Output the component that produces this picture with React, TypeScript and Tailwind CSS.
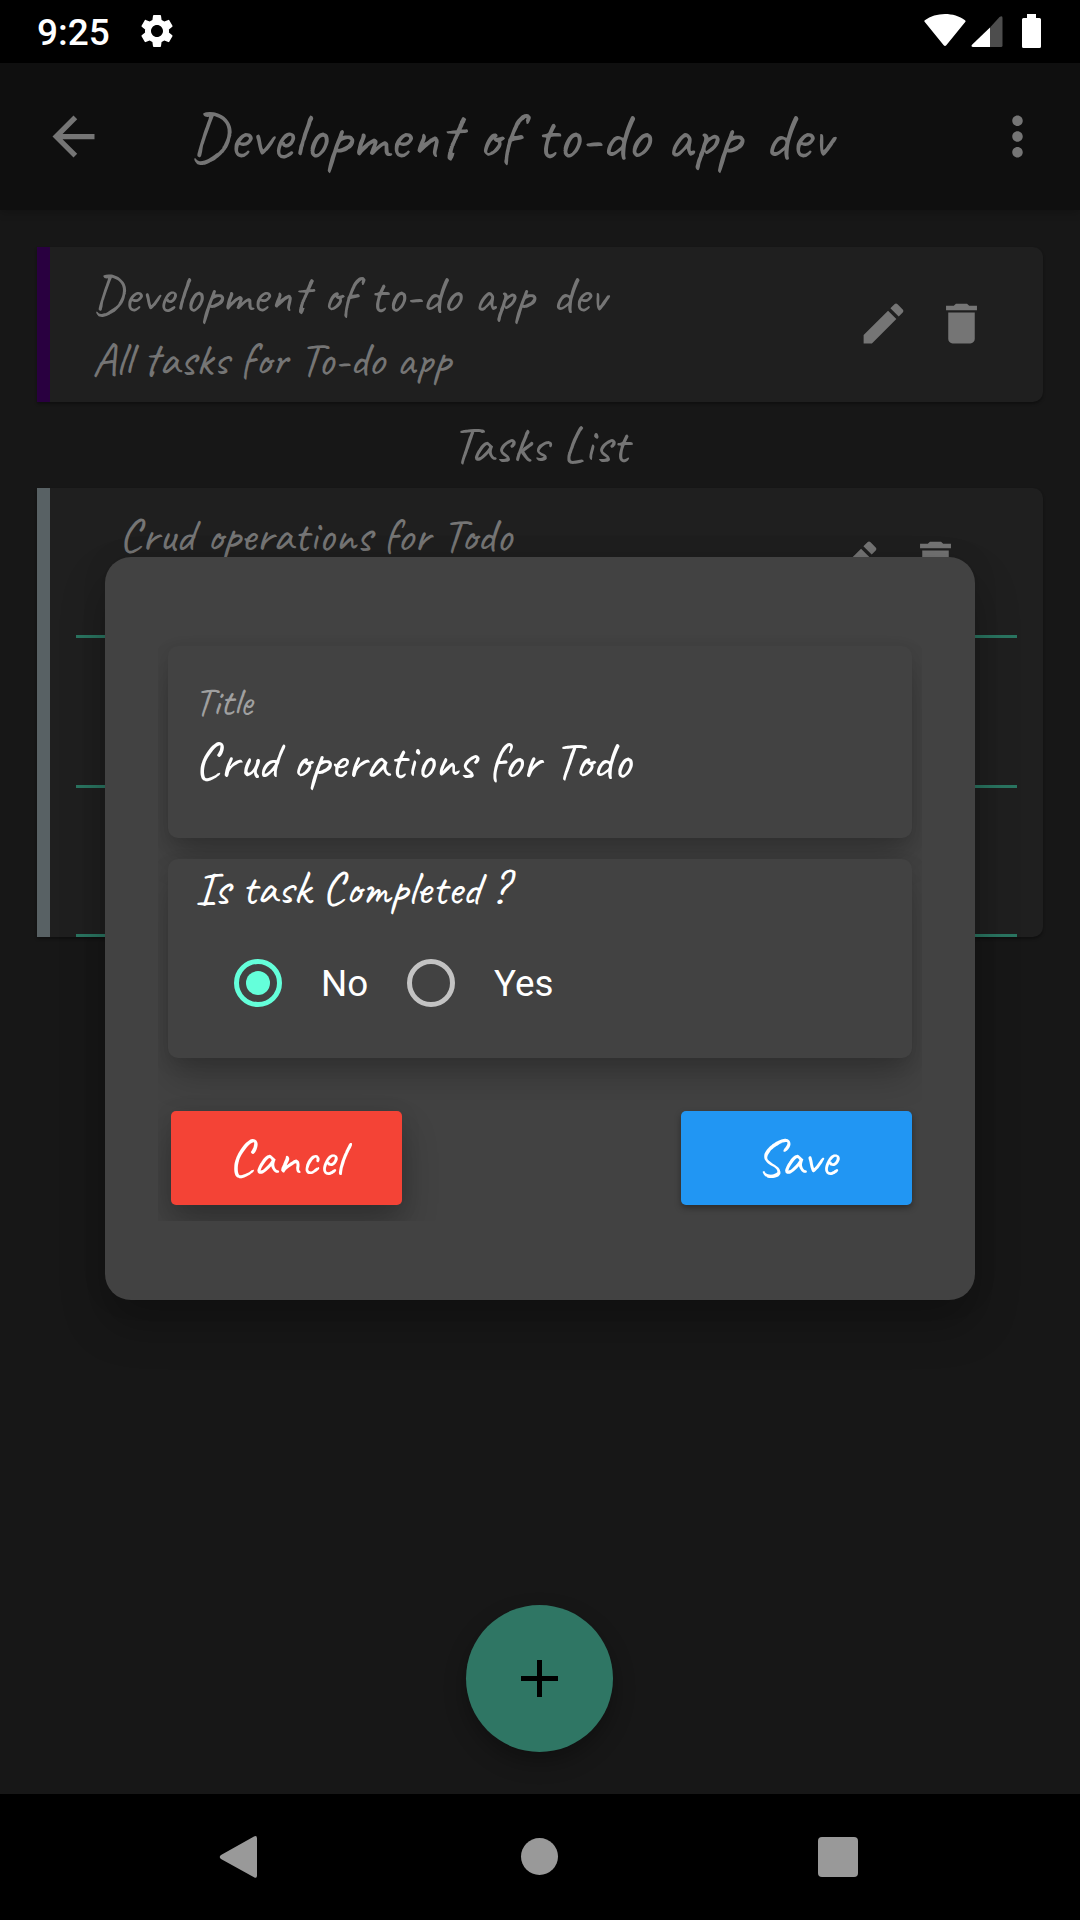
import type { ReactNode } from "react";
import { MdArrowBack, MdDelete, MdEdit, MdMoreVert, MdSettings } from "react-icons/md";

type ScriptProps = { children: ReactNode; className: string };

/* One line of handwritten text. */
function Script({ children, className }: ScriptProps) {
  return <div className={`whitespace-nowrap font-['Caveat',cursive] ${className}`}>{children}</div>;
}

function StatusBar() {
  return (
    <div className="flex h-[63px] items-start bg-black text-white">
      <div className="mt-[11px] ml-[37px] w-[73px] text-[37px] leading-[44px] font-medium">9:25</div>
      <MdSettings className="mt-[11px] ml-[27px] size-[40px]" />
      <svg className="mt-[14px] ml-auto" width="118" height="35" viewBox="0 0 118 35" fill="#fff">
        <path d="M.8 8Q-.2 7 .8 6.2C12-2 30-2 41 6.200Q42 7 41.200 8L22.300 31.200Q21 32.600 19.700 31.200Z" />
        <path d="M66 13.500V33H49Q46.600 32.500 48 30.800Z" />
        <path d="M66 13.500 75.500 3.100Q78.500 1 78.500 4V31.500Q78.500 33 77 33H66Z" fill="#4d4d4d" />
        <path d="M103 0h9v4h3.500q1.500 0 1.500 1.500v27q0 1.500-1.500 1.500h-16q-1.500 0-1.500-1.500v-27q0-1.500 1.500-1.500h3.500Z" />
      </svg>
      <div className="w-[38px]" />
    </div>
  );
}

function AppBar() {
  return (
    <header className="relative flex h-[147px] items-center bg-[#0f0f0f] text-[#757575] shadow-[0_3px_8px_rgba(0,0,0,0.2)]">
      <MdArrowBack className="ml-[42px] size-[63px]" />
      <Script className="ml-[84px] text-[65.625px] leading-[83px]">
        Development of to-do app <span className="ml-[6.500px]">dev</span>
      </Script>
      <MdMoreVert className="mr-[31.500px] ml-auto size-[63px]" />
    </header>
  );
}

function ProjectCard() {
  return (
    <section className="mx-[37px] mt-[37px] flex h-[154.500px] rounded-r-[10px] bg-[#1f1f1f] text-[#757575] shadow-[0_2px_3px_rgba(0,0,0,0.35)]">
      <div className="w-[13px] bg-[#290040]" />
      <div className="ml-[42px] flex flex-col gap-[2px] pt-[15px]">
        <Script className="text-[52.5px] leading-[66px]">
          Development of to-do app <span className="ml-[5px]">dev</span>
        </Script>
        <Script className="text-[47.25px] leading-[60px]">All tasks for To-do app</Script>
      </div>
      <div className="mr-[55px] ml-auto flex items-center gap-[25.500px] pb-[1px]">
        <MdEdit className="size-[53px]" />
        <MdDelete className="size-[53px]" />
      </div>
    </section>
  );
}

function TaskCard() {
  return (
    <section className="mx-[37px] mt-[10.500px] flex h-[449px] rounded-r-[10px] bg-[#1f1f1f] text-[#757575] shadow-[0_2px_3px_rgba(0,0,0,0.35)]">
      <div className="w-[13px] bg-[#586164]" />
      <div className="mr-[26px] ml-[26px] flex flex-1 flex-col">
        <div className="flex h-[150px] items-start border-b-3 border-[#2a7561] pt-[18px] pl-[43px]">
          <Script className="text-[47.25px] leading-[60px]">Crud operations for Todo</Script>
          <div className="mt-[29px] mr-[55px] ml-auto flex gap-[26px]">
            <MdEdit className="size-[53px]" />
            <MdDelete className="size-[53px]" />
          </div>
        </div>
        <div className="h-[150px] border-b-3 border-[#2a7561]" />
        <div className="h-[149px] border-b-3 border-[#2a7561]" />
      </div>
    </section>
  );
}

function Dialog() {
  return (
    <div
      role="dialog"
      className="absolute top-[557px] left-[105px] h-[743px] w-[870px] rounded-[26px] bg-[#424242] px-[53px] text-white shadow-[0_24px_44px_rgba(0,0,0,0.25),0_0_24px_rgba(0,0,0,0.1)]"
    >
      <div className="flex h-[664px] flex-col overflow-hidden px-[10px] pt-[89px]">
        <div className="h-[192px] shrink-0 rounded-[10px] bg-[#424242] pt-[31px] pl-[26.500px] shadow-[0_22px_34px_-4px_rgba(0,0,0,0.22),0_5px_18px_rgba(0,0,0,0.11)]">
          <Script className="text-[39.375px] leading-[50px] text-[#a0a0a0]">Title</Script>
          <Script className="mt-[1px] text-[52.5px] leading-[66px]">Crud operations for Todo</Script>
        </div>
        <div className="relative mt-[21px] h-[199px] shrink-0 rounded-[10px] bg-[#424242] shadow-[0_22px_34px_-4px_rgba(0,0,0,0.22),0_5px_18px_rgba(0,0,0,0.11)]">
          <Script className="ml-[27px] text-[47.25px] leading-[60px]">
            Is task Completed <span className="-ml-[2px]">?</span>
          </Script>
          <div className="mt-[39.500px] ml-[66px] flex h-[48px] items-center text-[36.750px]">
            <span className="flex size-[48px] items-center justify-center rounded-full border-[5px] border-[#64ffda]">
              <span className="size-[24px] rounded-full bg-[#64ffda]" />
            </span>
            <span className="mt-[2px] ml-[39px] w-[86px]">No</span>
            <span className="size-[48px] rounded-full border-[5px] border-[#c3c3c3]" />
            <span className="mt-[2px] ml-[39px]">Yes</span>
          </div>
        </div>
        <div className="relative mt-[53px] flex h-[94px] shrink-0 justify-between pl-[2.500px]">
          <button className="flex w-[231px] items-center justify-center rounded-[5px] bg-[#f44336] shadow-[0_20px_36px_rgba(0,0,0,0.24),0_4px_20px_rgba(0,0,0,0.1)]">
            <Script className="text-[52.5px] leading-[66px]">Cancel</Script>
          </button>
          <button className="flex w-[231px] items-center justify-center rounded-[5px] bg-[#2196f3] shadow-[0_3px_6px_rgba(0,0,0,0.35)]">
            <Script className="text-[52.5px] leading-[66px]">Save</Script>
          </button>
        </div>
      </div>
    </div>
  );
}

function NavBar() {
  return (
    <nav className="flex h-[126px] items-center justify-between bg-black pr-[222px] pl-[219px]">
      <svg width="38" height="44" viewBox="0 0 38 44" fill="#999">
        <path d="M35 1.500Q38 0 38 3.500V40.500Q38 44 35 42.300L2 24Q-.5 22 2 20Z" />
      </svg>
      <span className="mb-[1px] ml-[3px] size-[37px] rounded-full bg-[#999]" />
      <span className="size-[40px] rounded-[4px] bg-[#999]" />
    </nav>
  );
}

export default function App() {
  return (
    <div className="relative flex h-[1920px] w-[1080px] flex-col overflow-hidden bg-[#171717] font-['Roboto',sans-serif]">
      <StatusBar />
      <AppBar />
      <ProjectCard />
      <Script className="mt-[10px] self-center text-[52.5px] leading-[66px] text-[#757575]">Tasks List</Script>
      <TaskCard />
      <button className="mt-auto mr-[1px] mb-[42px] flex size-[147px] items-center justify-center self-center rounded-full bg-[#2f7664] shadow-[0_10px_22px_rgba(0,0,0,0.3)]">
        <svg width="37" height="37" viewBox="0 0 37 37" fill="#000">
          <path d="M16 0h5v16h16v5H21v16h-5V21H0v-5h16Z" />
        </svg>
      </button>
      <NavBar />
      <Dialog />
    </div>
  );
}
